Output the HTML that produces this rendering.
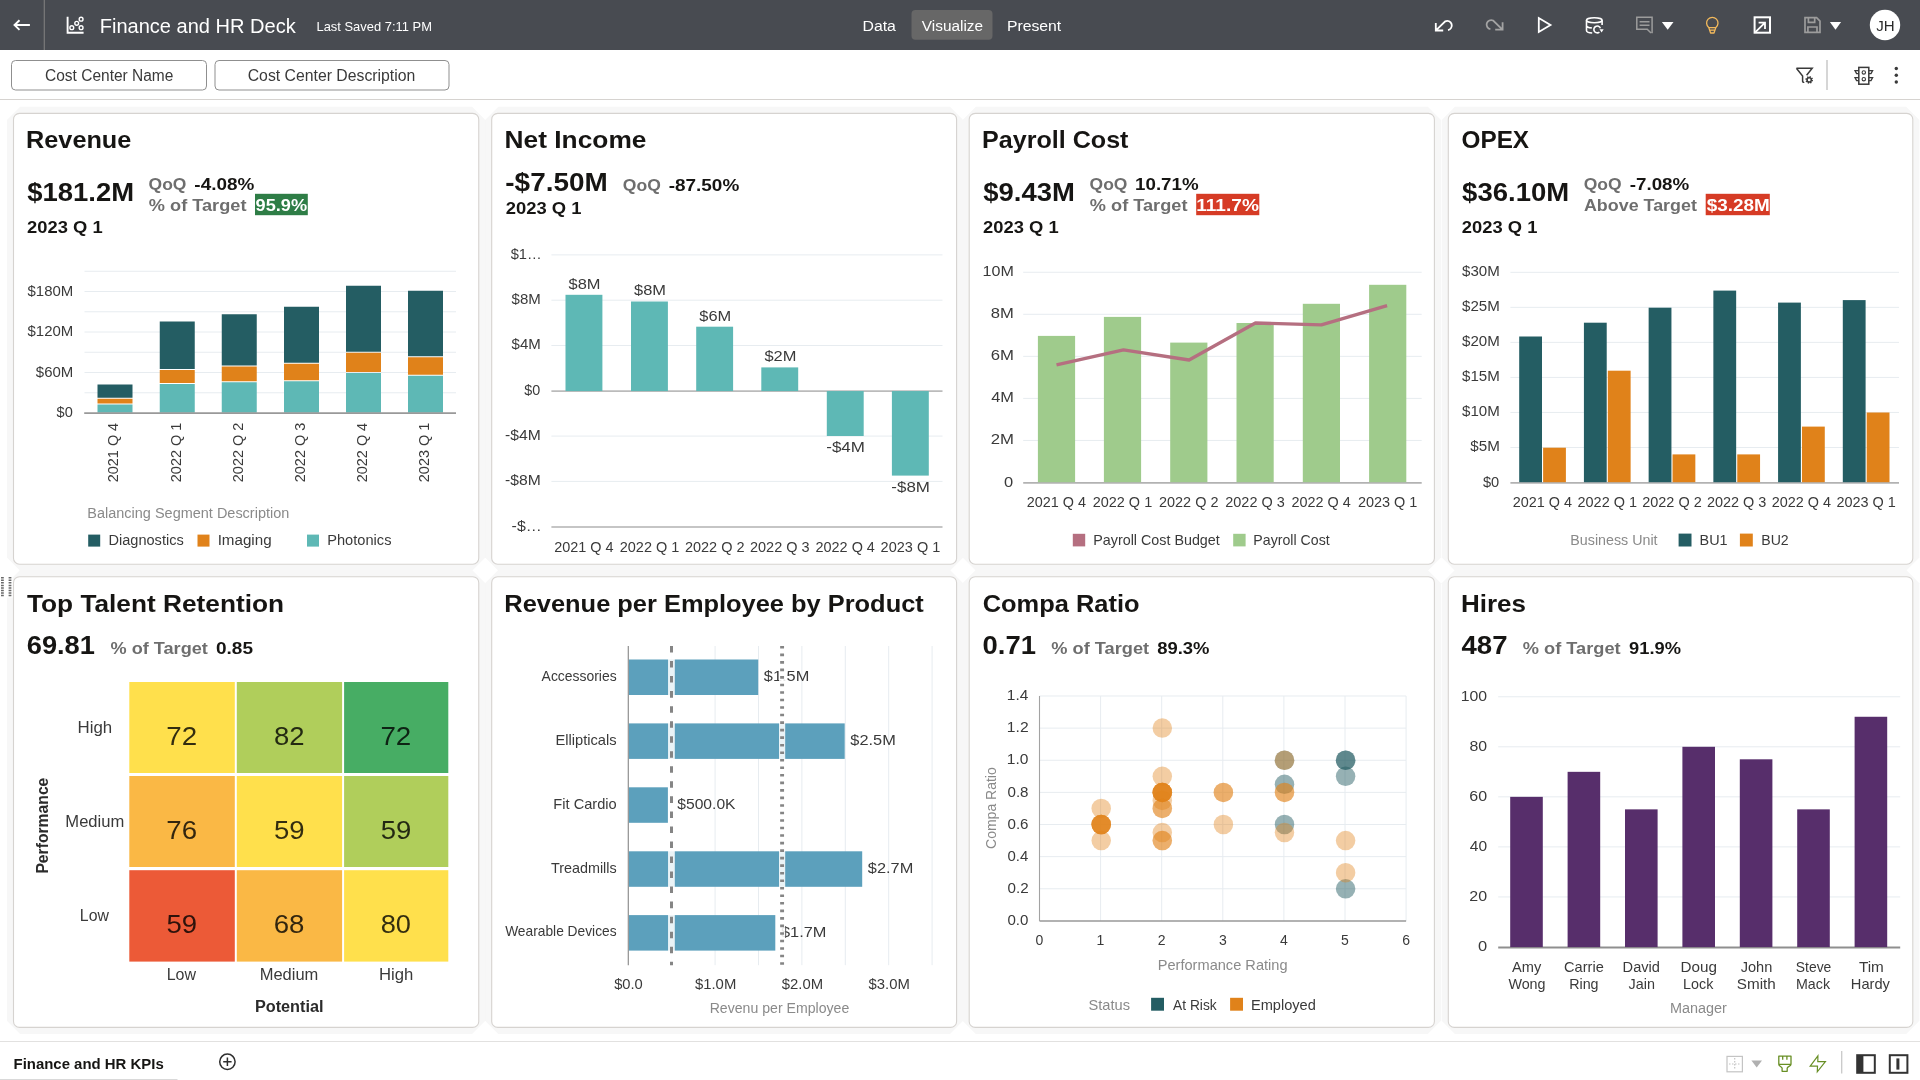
<!DOCTYPE html>
<html><head><meta charset="utf-8"><title>Finance and HR Deck</title>
<style>
html,body{margin:0;padding:0;background:#fff;}
body{width:1920px;height:1080px;overflow:hidden;position:relative;font-family:"Liberation Sans",sans-serif;}
.hdr{position:absolute;left:0;top:0;width:1920px;height:50px;background:#484b51;}
.fbar{position:absolute;left:0;top:50px;width:1920px;height:49px;background:#fff;border-bottom:1px solid #d6d3d0;}
.foot{position:absolute;left:0;top:1041px;width:1920px;height:38px;background:#fff;border-top:1px solid #e2e1e0;}
.card{position:absolute;box-sizing:content-box;background:#fff;border:1px solid #d5d2cf;border-radius:6px;box-shadow:0 0 0 4.5px #f7f7f7,0 0 2px 5px #f7f7f7;}
svg.ov{position:absolute;left:0;top:0;will-change:transform;font-family:"Liberation Sans",sans-serif;}
svg.ov text{white-space:pre;}
</style></head>
<body>
<div class="hdr"></div>
<div class="fbar"></div>
<div class="foot"></div>
<svg class="ov" width="1920" height="1080" viewBox="0 0 1920 1080">
<polygon points="20.1,106.8 472.15,106.8 485.35,120 485.35,557.6 472.15,570.8 20.1,570.8 6.9,557.6 6.9,120" fill="#f7f7f7"/>
<polygon points="498.3,106.8 950,106.8 963.2,120 963.2,557.6 950,570.8 498.3,570.8 485.1,557.6 485.1,120" fill="#f7f7f7"/>
<polygon points="975.8,106.8 1427.8,106.8 1441,120 1441,557.6 1427.8,570.8 975.8,570.8 962.6,557.6 962.6,120" fill="#f7f7f7"/>
<polygon points="1454.9,106.8 1906.2,106.8 1919.4,120 1919.4,557.6 1906.2,570.8 1454.9,570.8 1441.7,557.6 1441.7,120" fill="#f7f7f7"/>
<polygon points="20.1,570.1 472.15,570.1 485.35,583.3 485.35,1020.8 472.15,1034 20.1,1034 6.9,1020.8 6.9,583.3" fill="#f7f7f7"/>
<polygon points="498.3,570.1 950,570.1 963.2,583.3 963.2,1020.8 950,1034 498.3,1034 485.1,1020.8 485.1,583.3" fill="#f7f7f7"/>
<polygon points="975.8,570.1 1427.8,570.1 1441,583.3 1441,1020.8 1427.8,1034 975.8,1034 962.6,1020.8 962.6,583.3" fill="#f7f7f7"/>
<polygon points="1454.9,570.1 1906.2,570.1 1919.4,583.3 1919.4,1020.8 1906.2,1034 1454.9,1034 1441.7,1020.8 1441.7,583.3" fill="#f7f7f7"/>
<rect x="13.5" y="113.4" width="465.25" height="450.8" rx="6" fill="#fff" stroke="#d6d3d0" stroke-width="1.1"/>
<rect x="491.7" y="113.4" width="464.9" height="450.8" rx="6" fill="#fff" stroke="#d6d3d0" stroke-width="1.1"/>
<rect x="969.2" y="113.4" width="465.2" height="450.8" rx="6" fill="#fff" stroke="#d6d3d0" stroke-width="1.1"/>
<rect x="1448.3" y="113.4" width="464.5" height="450.8" rx="6" fill="#fff" stroke="#d6d3d0" stroke-width="1.1"/>
<rect x="13.5" y="576.7" width="465.25" height="450.7" rx="6" fill="#fff" stroke="#d6d3d0" stroke-width="1.1"/>
<rect x="491.7" y="576.7" width="464.9" height="450.7" rx="6" fill="#fff" stroke="#d6d3d0" stroke-width="1.1"/>
<rect x="969.2" y="576.7" width="465.2" height="450.7" rx="6" fill="#fff" stroke="#d6d3d0" stroke-width="1.1"/>
<rect x="1448.3" y="576.7" width="464.5" height="450.7" rx="6" fill="#fff" stroke="#d6d3d0" stroke-width="1.1"/>
<path d="M29.9 25.05H14.6M19.5 20.2L14.5 25.05L19.5 29.9" fill="none" stroke="#fff" stroke-width="1.9" stroke-linecap="butt" stroke-linejoin="miter"/>
<line x1="44.3" y1="0" x2="44.3" y2="50" stroke="#7b7b7b" stroke-width="1.2"/>
<path d="M67.6 16.7V32.7H83.6" fill="none" stroke="#fff" stroke-width="1.9"/>
<circle cx="71.8" cy="27.7" r="1.9" fill="none" stroke="#fff" stroke-width="1.4"/>
<circle cx="76.7" cy="23.3" r="1.9" fill="none" stroke="#fff" stroke-width="1.4"/>
<circle cx="81.1" cy="19.2" r="1.9" fill="none" stroke="#fff" stroke-width="1.4"/>
<circle cx="81.1" cy="27.7" r="1.9" fill="none" stroke="#fff" stroke-width="1.4"/>
<text transform="translate(99.7 32.8) scale(1.0178 1)" font-size="19.7" fill="#ffffff">Finance and HR Deck</text>
<text transform="translate(316.47 30.8) scale(1.0602 1)" font-size="12.2" fill="#ffffff">Last Saved 7:11 PM</text>
<text transform="translate(862.53 30.6) scale(1.0691 1)" font-size="14.8" fill="#ffffff">Data</text>
<rect x="911.5" y="10" width="81" height="29.8" rx="4" fill="#676767"/>
<text transform="translate(921.82 30.6) scale(1.0392 1)" font-size="14.8" fill="#ffffff">Visualize</text>
<text transform="translate(1006.94 30.6) scale(1.0658 1)" font-size="14.8" fill="#ffffff">Present</text>
<g stroke="#fff"><path d="M1435.8 23V30.5H1443.2 M1436.2 30.1L1445.26 21.33A4.6 4.6 0 1 1 1448 30.03" fill="none" stroke-width="1.8"/></g>
<g transform="translate(2938.4 -0.8) scale(-1 1)" stroke="#a3a3a3"><path d="M1435.8 23V30.5H1443.2 M1436.2 30.1L1445.26 21.33A4.6 4.6 0 1 1 1448 30.03" fill="none" stroke-width="1.8"/></g>
<path d="M1538.8 18.1V32L1550.5 25.05Z" fill="none" stroke="#fff" stroke-width="1.8" stroke-linejoin="miter"/>
<ellipse cx="1594.3" cy="20.2" rx="7.8" ry="2.5" fill="none" stroke="#fff" stroke-width="1.6"/>
<path d="M1586.5 20.2V30.4C1586.5 31.8 1589 32.8 1592.2 33 M1586.5 25.4C1586.5 26.8 1589 27.7 1591.8 27.9 M1602.1 20.2V24.9" fill="none" stroke="#fff" stroke-width="1.6"/>
<path d="M1600.4 28.2A3.4 3.4 0 1 0 1599.4 32.1" fill="none" stroke="#fff" stroke-width="1.6"/><path d="M1599.5 29.3H1603.7L1601.6 32.5Z" fill="#fff"/>
<path d="M1652.1 33.2V17.3H1636.8V29.3H1647.2L1651 33" fill="none" stroke="#9c9c9c" stroke-width="1.5" stroke-linejoin="miter"/>
<path d="M1639.6 21.7H1649.5M1639.6 25.3H1649.5" stroke="#9c9c9c" stroke-width="1.4"/>
<path d="M1661.9 22H1673.5L1667.7 29.8Z" fill="#fff"/>
<path d="M1708.7 27.4A5.7 5.7 0 1 1 1715.9 27.4L1714 33H1710.6Z M1708.9 27.7H1715.7 M1709.7 30.2H1714.9" fill="none" stroke="#f2b95c" stroke-width="1.3" stroke-linejoin="round"/>
<rect x="1754.6" y="17.3" width="15.4" height="15.4" fill="none" stroke="#fff" stroke-width="2"/>
<path d="M1755.4 32.2L1765 22.6 M1758.6 22.6H1765V29" fill="none" stroke="#fff" stroke-width="1.8"/>
<path d="M1805 17.7H1816.6L1820 21.2V32.3H1805Z M1808.4 17.7V22.4H1814.7V17.7 M1807.9 32.3V27H1817V32.3" fill="none" stroke="#9c9c9c" stroke-width="1.7" stroke-linejoin="miter"/>
<path d="M1829.9 22.1H1841.1L1835.5 29.7Z" fill="#fff"/>
<circle cx="1885" cy="25" r="15.2" fill="#fff"/>
<text transform="translate(1876.17 31) scale(1.0421 1)" font-size="14.5" fill="#2b2b2b">JH</text>
<rect x="11.5" y="60.5" width="195.0" height="29.5" rx="4" fill="#fff" stroke="#8f8f8f" stroke-width="1"/>
<text transform="translate(45.02 81.2) scale(0.994 1)" font-size="15.6" fill="#3a3a3a">Cost Center Name</text>
<rect x="215" y="60.5" width="234" height="29.5" rx="4" fill="#fff" stroke="#8f8f8f" stroke-width="1"/>
<text transform="translate(247.71 81.2) scale(1.0129 1)" font-size="15.6" fill="#3a3a3a">Cost Center Description</text>
<path d="M1796.4 68.2H1812.2L1806.6 75.2 M1796.4 68.2L1802.6 76V81.2C1802.6 82.2 1803.4 82.6 1804.2 82.2" fill="none" stroke="#3a3a3a" stroke-width="1.5"/>
<circle cx="1809.2" cy="79.9" r="3" fill="none" stroke="#3a3a3a" stroke-width="1.6" stroke-dasharray="1.25 1.1"/><circle cx="1809.2" cy="79.9" r="2.1" fill="none" stroke="#3a3a3a" stroke-width="1.5"/>
<line x1="1827" y1="60" x2="1827" y2="90" stroke="#c9c9c9" stroke-width="1.5"/>
<rect x="1858.8" y="67.4" width="10" height="16.8" fill="none" stroke="#3a3a3a" stroke-width="1.5"/>
<circle cx="1863.8" cy="72.4" r="1.7" fill="none" stroke="#3a3a3a" stroke-width="1.1"/><circle cx="1863.8" cy="79.2" r="1.7" fill="none" stroke="#3a3a3a" stroke-width="1.1"/>
<path d="M1858.8 70.6H1855L1856.6 73.6H1858.8 M1858.8 77.6H1855L1856.6 80.6H1858.8 M1868.8 70.6H1872.6L1871 73.6H1868.8 M1868.8 77.6H1872.6L1871 80.6H1868.8" fill="none" stroke="#3a3a3a" stroke-width="1.3"/>
<circle cx="1896.3" cy="68.5" r="1.7" fill="#3a3a3a"/>
<circle cx="1896.3" cy="75.3" r="1.7" fill="#3a3a3a"/>
<circle cx="1896.3" cy="82" r="1.7" fill="#3a3a3a"/>
<text transform="translate(13.53 1068.7) scale(1.0166 1)" font-size="14.7" fill="#161513" font-weight="700">Finance and HR KPIs</text>
<line x1="0" y1="1079.5" x2="177.5" y2="1079.5" stroke="#d9d9d9" stroke-width="1"/>
<circle cx="227.4" cy="1061.8" r="7.7" fill="none" stroke="#2f2f2f" stroke-width="1.5"/><path d="M223.2 1061.8H231.6M227.4 1057.6V1066" stroke="#2f2f2f" stroke-width="1.5"/>
<rect x="1727" y="1056.4" width="15.4" height="15.4" fill="none" stroke="#c4c4c4" stroke-width="1.2"/>
<path d="M1734.7 1058V1070M1729 1064H1740.6" stroke="#c4c4c4" stroke-width="1.2" stroke-dasharray="1.5 1.5"/>
<path d="M1751.4 1060.6H1762L1756.7 1067.4Z" fill="#b0b0b0"/>
<path d="M1778.8 1056.1H1791V1064.3C1791 1066.6 1787.7 1066.2 1787.2 1068.1V1071.3H1782.1V1068.1C1781.6 1066.2 1778.8 1066.6 1778.8 1064.3Z M1778.8 1064.3H1791 M1782.7 1056.1V1059.8 M1786.9 1056.1V1059.8" fill="none" stroke="#688f25" stroke-width="1.3" stroke-linejoin="round"/>
<path d="M1817.9 1055.9L1810.2 1066.2H1817.5L1817.3 1071.8L1825.4 1061.6H1817.8Z" fill="none" stroke="#688f25" stroke-width="1.2" stroke-linejoin="miter"/>
<line x1="1841.7" y1="1051" x2="1841.7" y2="1073.6" stroke="#c9c9c9" stroke-width="1.3"/>
<rect x="1857.2" y="1055.2" width="17.6" height="17.6" fill="none" stroke="#333" stroke-width="2"/><rect x="1857" y="1055" width="6.4" height="18" fill="#333"/>
<rect x="1889.8" y="1055.2" width="17.6" height="17.6" fill="none" stroke="#333" stroke-width="2"/><rect x="1896.4" y="1058.4" width="3" height="11.2" fill="#333"/>
<rect x="0" y="572" width="12.6" height="25.5" fill="#fff"/>
<path d="M2.4 577.05V597M10 577.05V597" stroke="#6a6a6a" stroke-width="2.8" stroke-dasharray="1.5 1.03"/>
<text transform="translate(26.06 148.3) scale(1.0887 1)" font-size="23.2" fill="#161513" font-weight="700">Revenue</text>
<text transform="translate(27.29 200.5) scale(1.0485 1)" font-size="26.2" fill="#161513" font-weight="700">$181.2M</text>
<text transform="translate(27.06 233.3) scale(1.0807 1)" font-size="17" fill="#161513" font-weight="700">2023 Q 1</text>
<text transform="translate(148.6 190) scale(1.0273 1)" font-size="17" fill="#6e6e6e" font-weight="700">QoQ</text>
<text transform="translate(194.34 190) scale(1.1122 1)" font-size="17" fill="#161513" font-weight="700">-4.08%</text>
<text transform="translate(148.85 211.3) scale(1.0695 1)" font-size="17" fill="#6e6e6e" font-weight="700">% of Target</text>
<rect x="255" y="193.8" width="52.8" height="21.4" fill="#2e7d46"/>
<text transform="translate(255.56 211.3) scale(1.0705 1)" font-size="17" fill="#fff" font-weight="700">95.9%</text>
<line x1="84.5" y1="392.75" x2="456" y2="392.75" stroke="#e7ecf0" stroke-width="1"/>
<line x1="84.5" y1="372.5" x2="456" y2="372.5" stroke="#e7ecf0" stroke-width="1"/>
<line x1="84.5" y1="352.25" x2="456" y2="352.25" stroke="#e7ecf0" stroke-width="1"/>
<line x1="84.5" y1="332" x2="456" y2="332" stroke="#e7ecf0" stroke-width="1"/>
<line x1="84.5" y1="311.75" x2="456" y2="311.75" stroke="#e7ecf0" stroke-width="1"/>
<line x1="84.5" y1="291.5" x2="456" y2="291.5" stroke="#e7ecf0" stroke-width="1"/>
<line x1="84.5" y1="271.25" x2="456" y2="271.25" stroke="#e7ecf0" stroke-width="1"/>
<text transform="translate(27.55 295.55) scale(1.0702 1)" font-size="14" fill="#3a3a3a">$180M</text>
<text transform="translate(27.55 336.05) scale(1.0702 1)" font-size="14" fill="#3a3a3a">$120M</text>
<text transform="translate(35.85 376.55) scale(1.0707 1)" font-size="14" fill="#3a3a3a">$60M</text>
<text transform="translate(56.55 416.8) scale(1.0396 1)" font-size="14" fill="#3a3a3a">$0</text>
<rect x="97.5" y="384.5" width="35" height="13.25" fill="#245d63"/>
<rect x="97.5" y="398.75" width="35" height="4.75" fill="#e0821a"/>
<rect x="97.5" y="404.5" width="35" height="8.2" fill="#5eb8b5"/>
<text transform="translate(118.4 423.2) rotate(-90) translate(-59.02 0) scale(1.0091 1)" font-size="14.3" fill="#3a3a3a">2021 Q 4</text>
<rect x="159.75" y="321.5" width="35" height="47.5" fill="#245d63"/>
<rect x="159.75" y="370" width="35" height="13" fill="#e0821a"/>
<rect x="159.75" y="384" width="35" height="28.7" fill="#5eb8b5"/>
<text transform="translate(180.65 423.2) rotate(-90) translate(-59.03 0) scale(1.0142 1)" font-size="14.3" fill="#3a3a3a">2022 Q 1</text>
<rect x="221.75" y="314.25" width="35" height="51.25" fill="#245d63"/>
<rect x="221.75" y="366.5" width="35" height="14.75" fill="#e0821a"/>
<rect x="221.75" y="382.25" width="35" height="30.45" fill="#5eb8b5"/>
<text transform="translate(242.65 423.2) rotate(-90) translate(-59.03 0) scale(1.0142 1)" font-size="14.3" fill="#3a3a3a">2022 Q 2</text>
<rect x="284" y="306.75" width="35" height="56" fill="#245d63"/>
<rect x="284" y="363.75" width="35" height="16.5" fill="#e0821a"/>
<rect x="284" y="381.25" width="35" height="31.45" fill="#5eb8b5"/>
<text transform="translate(304.9 423.2) rotate(-90) translate(-59.02 0) scale(1.0129 1)" font-size="14.3" fill="#3a3a3a">2022 Q 3</text>
<rect x="346" y="285.75" width="35" height="66" fill="#245d63"/>
<rect x="346" y="352.75" width="35" height="19.25" fill="#e0821a"/>
<rect x="346" y="373" width="35" height="39.7" fill="#5eb8b5"/>
<text transform="translate(366.9 423.2) rotate(-90) translate(-59.02 0) scale(1.0091 1)" font-size="14.3" fill="#3a3a3a">2022 Q 4</text>
<rect x="408" y="290.75" width="35" height="65.5" fill="#245d63"/>
<rect x="408" y="357.25" width="35" height="17.5" fill="#e0821a"/>
<rect x="408" y="375.75" width="35" height="36.95" fill="#5eb8b5"/>
<text transform="translate(428.9 423.2) rotate(-90) translate(-59.03 0) scale(1.0142 1)" font-size="14.3" fill="#3a3a3a">2023 Q 1</text>
<line x1="84.2" y1="413.1" x2="456" y2="413.1" stroke="#999999" stroke-width="1.8"/>
<text transform="translate(87.34 517.6) scale(1.0344 1)" font-size="14" fill="#8a8a8a">Balancing Segment Description</text>
<rect x="88.2" y="534.6" width="12" height="12" fill="#245d63"/>
<text transform="translate(108.54 545.4) scale(1.04 1)" font-size="14" fill="#3a3a3a">Diagnostics</text>
<rect x="197.5" y="534.6" width="12" height="12" fill="#e0821a"/>
<text transform="translate(217.63 545.4) scale(1.0845 1)" font-size="14" fill="#3a3a3a">Imaging</text>
<rect x="307" y="534.6" width="12" height="12" fill="#5eb8b5"/>
<text transform="translate(327.23 545.4) scale(1.0459 1)" font-size="14" fill="#3a3a3a">Photonics</text>
<text transform="translate(504.59 148.3) scale(1.1348 1)" font-size="23.2" fill="#161513" font-weight="700">Net Income</text>
<text transform="translate(505.32 191) scale(1.0659 1)" font-size="26.2" fill="#161513" font-weight="700">-$7.50M</text>
<text transform="translate(622.8 191) scale(1.0329 1)" font-size="17" fill="#6e6e6e" font-weight="700">QoQ</text>
<text transform="translate(668.64 191) scale(1.1155 1)" font-size="17" fill="#161513" font-weight="700">-87.50%</text>
<text transform="translate(505.66 214.3) scale(1.0836 1)" font-size="17" fill="#161513" font-weight="700">2023 Q 1</text>
<line x1="551.4" y1="481.4" x2="942.5" y2="481.4" stroke="#e7ecf0" stroke-width="1"/>
<line x1="551.4" y1="436.1" x2="942.5" y2="436.1" stroke="#e7ecf0" stroke-width="1"/>
<line x1="551.4" y1="345.5" x2="942.5" y2="345.5" stroke="#e7ecf0" stroke-width="1"/>
<line x1="551.4" y1="300.2" x2="942.5" y2="300.2" stroke="#e7ecf0" stroke-width="1"/>
<line x1="551.4" y1="254.9" x2="942.5" y2="254.9" stroke="#e7ecf0" stroke-width="1"/>
<line x1="551.4" y1="527" x2="942.5" y2="527" stroke="#b2b2b2" stroke-width="1.6"/>
<text transform="translate(510.65 258.7) scale(1.0469 1)" font-size="14" fill="#3a3a3a">$1…</text>
<text transform="translate(511.55 304) scale(1.0743 1)" font-size="14" fill="#3a3a3a">$8M</text>
<text transform="translate(511.55 349.3) scale(1.0743 1)" font-size="14" fill="#3a3a3a">$4M</text>
<text transform="translate(524.16 394.6) scale(1.0262 1)" font-size="14" fill="#3a3a3a">$0</text>
<text transform="translate(505.09 439.9) scale(1.1203 1)" font-size="14" fill="#3a3a3a">-$4M</text>
<text transform="translate(505.09 485.2) scale(1.1203 1)" font-size="14" fill="#3a3a3a">-$8M</text>
<text transform="translate(511.58 530.5) scale(1.1404 1)" font-size="14" fill="#3a3a3a">-$…</text>
<line x1="551.4" y1="391.05" x2="942.5" y2="391.05" stroke="#bbbbbb" stroke-width="1.7"/>
<rect x="565.5" y="294.8" width="36.9" height="96.25" fill="#5eb8b5"/>
<text transform="translate(568.59 288.6) scale(1.0961 1)" font-size="15" fill="#3a3a3a">$8M</text>
<text transform="translate(554.23 551.5) scale(1.0091 1)" font-size="14.3" fill="#3a3a3a">2021 Q 4</text>
<rect x="631" y="301.5" width="36.9" height="89.55" fill="#5eb8b5"/>
<text transform="translate(634.09 295.3) scale(1.0961 1)" font-size="15" fill="#3a3a3a">$8M</text>
<text transform="translate(619.72 551.5) scale(1.0142 1)" font-size="14.3" fill="#3a3a3a">2022 Q 1</text>
<rect x="696.2" y="326.7" width="36.9" height="64.35" fill="#5eb8b5"/>
<text transform="translate(699.29 320.5) scale(1.0961 1)" font-size="15" fill="#3a3a3a">$6M</text>
<text transform="translate(684.92 551.5) scale(1.0142 1)" font-size="14.3" fill="#3a3a3a">2022 Q 2</text>
<rect x="761.3" y="367.4" width="36.9" height="23.65" fill="#5eb8b5"/>
<text transform="translate(764.39 361.2) scale(1.0961 1)" font-size="15" fill="#3a3a3a">$2M</text>
<text transform="translate(750.03 551.5) scale(1.0129 1)" font-size="14.3" fill="#3a3a3a">2022 Q 3</text>
<rect x="826.8" y="391.05" width="36.9" height="44.95" fill="#5eb8b5"/>
<text transform="translate(826.24 452.1) scale(1.1554 1)" font-size="14.7" fill="#3a3a3a">-$4M</text>
<text transform="translate(815.53 551.5) scale(1.0091 1)" font-size="14.3" fill="#3a3a3a">2022 Q 4</text>
<rect x="891.9" y="391.05" width="36.9" height="84.55" fill="#5eb8b5"/>
<text transform="translate(891.34 491.7) scale(1.1554 1)" font-size="14.7" fill="#3a3a3a">-$8M</text>
<text transform="translate(880.62 551.5) scale(1.0142 1)" font-size="14.3" fill="#3a3a3a">2023 Q 1</text>
<text transform="translate(982.07 148.3) scale(1.0823 1)" font-size="23.2" fill="#161513" font-weight="700">Payroll Cost</text>
<text transform="translate(983.29 200.5) scale(1.0479 1)" font-size="26.2" fill="#161513" font-weight="700">$9.43M</text>
<text transform="translate(983.06 233.3) scale(1.0807 1)" font-size="17" fill="#161513" font-weight="700">2023 Q 1</text>
<text transform="translate(1089.6 190) scale(1.0273 1)" font-size="17" fill="#6e6e6e" font-weight="700">QoQ</text>
<text transform="translate(1135.08 190) scale(1.1018 1)" font-size="17" fill="#161513" font-weight="700">10.71%</text>
<text transform="translate(1089.85 211.3) scale(1.0695 1)" font-size="17" fill="#6e6e6e" font-weight="700">% of Target</text>
<rect x="1196.2" y="193.8" width="63.1" height="21.4" fill="#d63b25"/>
<text transform="translate(1196.25 211.3) scale(1.1231 1)" font-size="17" fill="#fff" font-weight="700">111.7%</text>
<line x1="1023.2" y1="440.45" x2="1421.7" y2="440.45" stroke="#e7ecf0" stroke-width="1"/>
<line x1="1023.2" y1="398.4" x2="1421.7" y2="398.4" stroke="#e7ecf0" stroke-width="1"/>
<line x1="1023.2" y1="356.35" x2="1421.7" y2="356.35" stroke="#e7ecf0" stroke-width="1"/>
<line x1="1023.2" y1="314.3" x2="1421.7" y2="314.3" stroke="#e7ecf0" stroke-width="1"/>
<line x1="1023.2" y1="272.25" x2="1421.7" y2="272.25" stroke="#e7ecf0" stroke-width="1"/>
<text transform="translate(982.59 276.25) scale(1.1492 1)" font-size="14" fill="#3a3a3a">10M</text>
<text transform="translate(990.84 318.3) scale(1.1867 1)" font-size="14" fill="#3a3a3a">8M</text>
<text transform="translate(990.66 360.35) scale(1.1961 1)" font-size="14" fill="#3a3a3a">6M</text>
<text transform="translate(991.17 402.4) scale(1.1683 1)" font-size="14" fill="#3a3a3a">4M</text>
<text transform="translate(990.66 444.45) scale(1.1961 1)" font-size="14" fill="#3a3a3a">2M</text>
<text transform="translate(1004.02 486.5) scale(1.1782 1)" font-size="14" fill="#3a3a3a">0</text>
<line x1="1023.2" y1="482.9" x2="1421.7" y2="482.9" stroke="#b2b2b2" stroke-width="1.6"/>
<rect x="1037.9" y="335.9" width="37.2" height="146.3" fill="#9fcb8c"/>
<text transform="translate(1026.68 506.6) scale(1.0074 1)" font-size="14.3" fill="#3a3a3a">2021 Q 4</text>
<rect x="1103.9" y="316.9" width="37.2" height="165.3" fill="#9fcb8c"/>
<text transform="translate(1092.68 506.6) scale(1.0124 1)" font-size="14.3" fill="#3a3a3a">2022 Q 1</text>
<rect x="1170.2" y="342.6" width="37.2" height="139.6" fill="#9fcb8c"/>
<text transform="translate(1158.98 506.6) scale(1.0124 1)" font-size="14.3" fill="#3a3a3a">2022 Q 2</text>
<rect x="1236.5" y="323" width="37.2" height="159.2" fill="#9fcb8c"/>
<text transform="translate(1225.28 506.6) scale(1.0112 1)" font-size="14.3" fill="#3a3a3a">2022 Q 3</text>
<rect x="1302.8" y="303.8" width="37.2" height="178.4" fill="#9fcb8c"/>
<text transform="translate(1291.58 506.6) scale(1.0074 1)" font-size="14.3" fill="#3a3a3a">2022 Q 4</text>
<rect x="1369.1" y="284.8" width="37.2" height="197.4" fill="#9fcb8c"/>
<text transform="translate(1357.88 506.6) scale(1.0124 1)" font-size="14.3" fill="#3a3a3a">2023 Q 1</text>
<polyline points="1056.5,364.9 1123.5,349.9 1189.1,360 1255.4,323 1321.4,324.9 1387.1,305.6" fill="none" stroke="#b56f80" stroke-width="3.4" stroke-linejoin="round" stroke-linecap="butt"/>
<rect x="1072.8" y="533.8" width="12.4" height="12.6" fill="#b56f80"/>
<text transform="translate(1093.25 545.4) scale(1.0229 1)" font-size="14" fill="#3a3a3a">Payroll Cost Budget</text>
<rect x="1233.2" y="533.8" width="12.4" height="12.6" fill="#9fcb8c"/>
<text transform="translate(1253.37 545.4) scale(1.0125 1)" font-size="14" fill="#3a3a3a">Payroll Cost</text>
<text transform="translate(1461.53 148.3) scale(1.0484 1)" font-size="23.2" fill="#161513" font-weight="700">OPEX</text>
<text transform="translate(1462.09 200.5) scale(1.0505 1)" font-size="26.2" fill="#161513" font-weight="700">$36.10M</text>
<text transform="translate(1461.86 233.3) scale(1.0807 1)" font-size="17" fill="#161513" font-weight="700">2023 Q 1</text>
<text transform="translate(1583.7 190) scale(1.0301 1)" font-size="17" fill="#6e6e6e" font-weight="700">QoQ</text>
<text transform="translate(1629.74 190) scale(1.1046 1)" font-size="17" fill="#161513" font-weight="700">-7.08%</text>
<text transform="translate(1583.95 211.3) scale(1.0528 1)" font-size="17" fill="#6e6e6e" font-weight="700">Above Target</text>
<rect x="1705.7" y="193.8" width="64.1" height="21.4" fill="#d63b25"/>
<text transform="translate(1706.72 211.3) scale(1.1115 1)" font-size="17" fill="#fff" font-weight="700">$3.28M</text>
<line x1="1510.4" y1="447.47" x2="1899" y2="447.47" stroke="#e7ecf0" stroke-width="1"/>
<line x1="1510.4" y1="412.44" x2="1899" y2="412.44" stroke="#e7ecf0" stroke-width="1"/>
<line x1="1510.4" y1="377.41" x2="1899" y2="377.41" stroke="#e7ecf0" stroke-width="1"/>
<line x1="1510.4" y1="342.38" x2="1899" y2="342.38" stroke="#e7ecf0" stroke-width="1"/>
<line x1="1510.4" y1="307.35" x2="1899" y2="307.35" stroke="#e7ecf0" stroke-width="1"/>
<line x1="1510.4" y1="272.32" x2="1899" y2="272.32" stroke="#e7ecf0" stroke-width="1"/>
<text transform="translate(1482.95 486.5) scale(1.0463 1)" font-size="14" fill="#3a3a3a">$0</text>
<text transform="translate(1470.35 451.47) scale(1.0859 1)" font-size="14" fill="#3a3a3a">$5M</text>
<text transform="translate(1462.05 416.44) scale(1.0796 1)" font-size="14" fill="#3a3a3a">$10M</text>
<text transform="translate(1462.05 381.41) scale(1.0796 1)" font-size="14" fill="#3a3a3a">$15M</text>
<text transform="translate(1462.05 346.38) scale(1.0796 1)" font-size="14" fill="#3a3a3a">$20M</text>
<text transform="translate(1462.05 311.35) scale(1.0796 1)" font-size="14" fill="#3a3a3a">$25M</text>
<text transform="translate(1462.05 276.32) scale(1.0796 1)" font-size="14" fill="#3a3a3a">$30M</text>
<line x1="1510.4" y1="482.9" x2="1899" y2="482.9" stroke="#b2b2b2" stroke-width="1.6"/>
<rect x="1519.2" y="336.5" width="22.8" height="145.7" fill="#245d63"/>
<rect x="1543.1" y="447.7" width="22.8" height="34.5" fill="#e0821a"/>
<text transform="translate(1512.78 506.6) scale(1.0074 1)" font-size="14.3" fill="#3a3a3a">2021 Q 4</text>
<rect x="1583.92" y="322.7" width="22.8" height="159.5" fill="#245d63"/>
<rect x="1607.82" y="370.7" width="22.8" height="111.5" fill="#e0821a"/>
<text transform="translate(1577.5 506.6) scale(1.0124 1)" font-size="14.3" fill="#3a3a3a">2022 Q 1</text>
<rect x="1648.64" y="307.7" width="22.8" height="174.5" fill="#245d63"/>
<rect x="1672.54" y="454.4" width="22.8" height="27.8" fill="#e0821a"/>
<text transform="translate(1642.22 506.6) scale(1.0124 1)" font-size="14.3" fill="#3a3a3a">2022 Q 2</text>
<rect x="1713.36" y="290.6" width="22.8" height="191.6" fill="#245d63"/>
<rect x="1737.26" y="454.4" width="22.8" height="27.8" fill="#e0821a"/>
<text transform="translate(1706.94 506.6) scale(1.0112 1)" font-size="14.3" fill="#3a3a3a">2022 Q 3</text>
<rect x="1778.08" y="302.6" width="22.8" height="179.6" fill="#245d63"/>
<rect x="1801.98" y="426.6" width="22.8" height="55.6" fill="#e0821a"/>
<text transform="translate(1771.66 506.6) scale(1.0074 1)" font-size="14.3" fill="#3a3a3a">2022 Q 4</text>
<rect x="1842.8" y="300.1" width="22.8" height="182.1" fill="#245d63"/>
<rect x="1866.7" y="412.5" width="22.8" height="69.7" fill="#e0821a"/>
<text transform="translate(1836.38 506.6) scale(1.0124 1)" font-size="14.3" fill="#3a3a3a">2023 Q 1</text>
<text transform="translate(1570.36 545.4) scale(1.0196 1)" font-size="14" fill="#8a8a8a">Business Unit</text>
<rect x="1678.6" y="533.6" width="12.9" height="12.9" fill="#245d63"/>
<text transform="translate(1699.54 545.4) scale(1.0322 1)" font-size="14" fill="#3a3a3a">BU1</text>
<rect x="1739.9" y="533.6" width="12.9" height="12.9" fill="#e0821a"/>
<text transform="translate(1761.27 545.4) scale(1.0086 1)" font-size="14" fill="#3a3a3a">BU2</text>
<text transform="translate(26.94 612.3) scale(1.1315 1)" font-size="23.2" fill="#161513" font-weight="700">Top Talent Retention</text>
<text transform="translate(26.75 654.2) scale(1.0402 1)" font-size="26.2" fill="#161513" font-weight="700">69.81</text>
<text transform="translate(110.55 654.4) scale(1.0662 1)" font-size="17" fill="#6e6e6e" font-weight="700">% of Target</text>
<text transform="translate(215.94 654.4) scale(1.1202 1)" font-size="17" fill="#161513" font-weight="700">0.85</text>
<rect x="129.3" y="682" width="105.5" height="91" fill="#ffe04c"/>
<text transform="translate(166.26 744.8) scale(1.0686 1)" font-size="26" fill="#000" fill-opacity="0.8">72</text>
<rect x="236.8" y="682" width="105.3" height="91" fill="#b0ce5b"/>
<text transform="translate(273.95 744.8) scale(1.0582 1)" font-size="26" fill="#000" fill-opacity="0.8">82</text>
<rect x="344.1" y="682" width="104.2" height="91" fill="#47ad64"/>
<text transform="translate(380.41 744.8) scale(1.0686 1)" font-size="26" fill="#000" fill-opacity="0.8">72</text>
<rect x="129.3" y="776" width="105.5" height="91" fill="#fab845"/>
<text transform="translate(166.27 838.9) scale(1.0633 1)" font-size="26" fill="#000" fill-opacity="0.8">76</text>
<rect x="236.8" y="776" width="105.3" height="91" fill="#ffe04c"/>
<text transform="translate(273.95 838.9) scale(1.0582 1)" font-size="26" fill="#000" fill-opacity="0.8">59</text>
<rect x="344.1" y="776" width="104.2" height="91" fill="#b0ce5b"/>
<text transform="translate(380.7 838.9) scale(1.0582 1)" font-size="26" fill="#000" fill-opacity="0.8">59</text>
<rect x="129.3" y="870.2" width="105.5" height="91.4" fill="#ec5a37"/>
<text transform="translate(166.55 933.2) scale(1.0582 1)" font-size="26" fill="#000" fill-opacity="0.8">59</text>
<rect x="236.8" y="870.2" width="105.3" height="91.4" fill="#fab845"/>
<text transform="translate(273.67 933.2) scale(1.0633 1)" font-size="26" fill="#000" fill-opacity="0.8">68</text>
<rect x="344.1" y="870.2" width="104.2" height="91.4" fill="#ffe04c"/>
<text transform="translate(380.71 933.2) scale(1.0479 1)" font-size="26" fill="#000" fill-opacity="0.8">80</text>
<text transform="translate(77.5 732.9) scale(1.0812 1)" font-size="15.6" fill="#3a3a3a">High</text>
<text transform="translate(65.32 826.8) scale(1.0643 1)" font-size="15.6" fill="#3a3a3a">Medium</text>
<text transform="translate(79.83 920.9) scale(1.0154 1)" font-size="15.6" fill="#3a3a3a">Low</text>
<text transform="translate(166.67 980.2) scale(1.0264 1)" font-size="15.6" fill="#3a3a3a">Low</text>
<text transform="translate(259.68 980.2) scale(1.0587 1)" font-size="15.6" fill="#3a3a3a">Medium</text>
<text transform="translate(378.96 980.2) scale(1.0712 1)" font-size="15.6" fill="#3a3a3a">High</text>
<text transform="translate(254.89 1011.7) scale(1.0423 1)" font-size="15.6" fill="#2b2b2b" font-weight="700">Potential</text>
<text transform="translate(47.7 825.3) rotate(-90) translate(-48.32 0) scale(1.0073 1)" font-size="15.6" fill="#2b2b2b" font-weight="700">Performance</text>
<text transform="translate(504.35 612.3) scale(1.0956 1)" font-size="23.2" fill="#161513" font-weight="700">Revenue per Employee by Product</text>
<line x1="671.7" y1="646" x2="671.7" y2="965.2" stroke="#e7ecf0" stroke-width="1"/>
<line x1="715.1" y1="646" x2="715.1" y2="965.2" stroke="#e7ecf0" stroke-width="1"/>
<line x1="758.5" y1="646" x2="758.5" y2="965.2" stroke="#e7ecf0" stroke-width="1"/>
<line x1="801.9" y1="646" x2="801.9" y2="965.2" stroke="#e7ecf0" stroke-width="1"/>
<line x1="845.3" y1="646" x2="845.3" y2="965.2" stroke="#e7ecf0" stroke-width="1"/>
<line x1="888.7" y1="646" x2="888.7" y2="965.2" stroke="#e7ecf0" stroke-width="1"/>
<line x1="932.1" y1="646" x2="932.1" y2="965.2" stroke="#e7ecf0" stroke-width="1"/>
<rect x="628.8" y="659.5" width="129.4" height="35.5" fill="#5ca0bc"/>
<text transform="translate(541.6 680.75) scale(0.9951 1)" font-size="14" fill="#3a3a3a">Accessories</text>
<text transform="translate(763.84 681.15) scale(1.0905 1)" font-size="15" fill="#3a3a3a">$1.5M</text>
<rect x="628.8" y="723.4" width="215.9" height="35.5" fill="#5ca0bc"/>
<text transform="translate(555.42 744.65) scale(1.0499 1)" font-size="14" fill="#3a3a3a">Ellipticals</text>
<text transform="translate(850.34 745.05) scale(1.0905 1)" font-size="15" fill="#3a3a3a">$2.5M</text>
<rect x="628.8" y="787.3" width="39.1" height="35.5" fill="#5ca0bc"/>
<text transform="translate(553.33 808.55) scale(1.0456 1)" font-size="14" fill="#3a3a3a">Fit Cardio</text>
<text transform="translate(677.24 808.95) scale(1.0436 1)" font-size="15" fill="#3a3a3a">$500.0K</text>
<rect x="628.8" y="851.3" width="233.4" height="35.5" fill="#5ca0bc"/>
<text transform="translate(550.91 872.55) scale(1.0272 1)" font-size="14" fill="#3a3a3a">Treadmills</text>
<text transform="translate(867.84 872.95) scale(1.0905 1)" font-size="15" fill="#3a3a3a">$2.7M</text>
<rect x="628.8" y="915.1" width="146.5" height="35.5" fill="#5ca0bc"/>
<text transform="translate(505.13 936.35) scale(0.9843 1)" font-size="14" fill="#3a3a3a">Wearable Devices</text>
<text transform="translate(780.94 936.75) scale(1.0905 1)" font-size="15" fill="#3a3a3a">$1.7M</text>
<rect x="668.05" y="646" width="6.75" height="319.2" fill="#fff" fill-opacity="0.87"/>
<rect x="779" y="646" width="6.2" height="319.2" fill="#fff" fill-opacity="0.87"/>
<line x1="628.3" y1="646" x2="628.3" y2="965.2" stroke="#8f8f8f" stroke-width="1.2"/>
<line x1="671.5" y1="646" x2="671.5" y2="965.2" stroke="#858585" stroke-width="3" stroke-dasharray="6.55 8.485"/>
<line x1="782.1" y1="646" x2="782.1" y2="965.2" stroke="#858585" stroke-width="3.9" stroke-dasharray="2.6 4.93"/>
<text transform="translate(614.15 988.7) scale(1.0526 1)" font-size="14" fill="#3a3a3a">$0.0</text>
<text transform="translate(694.95 988.7) scale(1.0621 1)" font-size="14" fill="#3a3a3a">$1.0M</text>
<text transform="translate(781.75 988.7) scale(1.0621 1)" font-size="14" fill="#3a3a3a">$2.0M</text>
<text transform="translate(868.55 988.7) scale(1.0621 1)" font-size="14" fill="#3a3a3a">$3.0M</text>
<text transform="translate(709.67 1013.3) scale(1.0084 1)" font-size="14" fill="#8a8a8a">Revenu per Employee</text>
<text transform="translate(982.68 612.3) scale(1.097 1)" font-size="23.2" fill="#161513" font-weight="700">Compa Ratio</text>
<text transform="translate(982.6 654.2) scale(1.0476 1)" font-size="26.2" fill="#161513" font-weight="700">0.71</text>
<text transform="translate(1051.34 654.4) scale(1.0717 1)" font-size="17" fill="#6e6e6e" font-weight="700">% of Target</text>
<text transform="translate(1157.15 654.4) scale(1.0855 1)" font-size="17" fill="#161513" font-weight="700">89.3%</text>
<line x1="1039.5" y1="888.77" x2="1406.1" y2="888.77" stroke="#e7ecf0" stroke-width="1"/>
<line x1="1039.5" y1="856.64" x2="1406.1" y2="856.64" stroke="#e7ecf0" stroke-width="1"/>
<line x1="1039.5" y1="824.51" x2="1406.1" y2="824.51" stroke="#e7ecf0" stroke-width="1"/>
<line x1="1039.5" y1="792.38" x2="1406.1" y2="792.38" stroke="#e7ecf0" stroke-width="1"/>
<line x1="1039.5" y1="760.25" x2="1406.1" y2="760.25" stroke="#e7ecf0" stroke-width="1"/>
<line x1="1039.5" y1="728.12" x2="1406.1" y2="728.12" stroke="#e7ecf0" stroke-width="1"/>
<line x1="1039.5" y1="695.99" x2="1406.1" y2="695.99" stroke="#e7ecf0" stroke-width="1"/>
<line x1="1100.6" y1="695.99" x2="1100.6" y2="920.9" stroke="#e7ecf0" stroke-width="1"/>
<line x1="1161.7" y1="695.99" x2="1161.7" y2="920.9" stroke="#e7ecf0" stroke-width="1"/>
<line x1="1222.8" y1="695.99" x2="1222.8" y2="920.9" stroke="#e7ecf0" stroke-width="1"/>
<line x1="1283.9" y1="695.99" x2="1283.9" y2="920.9" stroke="#e7ecf0" stroke-width="1"/>
<line x1="1345" y1="695.99" x2="1345" y2="920.9" stroke="#e7ecf0" stroke-width="1"/>
<line x1="1406.1" y1="695.99" x2="1406.1" y2="920.9" stroke="#e7ecf0" stroke-width="1"/>
<text transform="translate(1007.47 925.1) scale(1.0768 1)" font-size="14" fill="#3a3a3a">0.0</text>
<text transform="translate(1007.47 892.97) scale(1.0851 1)" font-size="14" fill="#3a3a3a">0.2</text>
<text transform="translate(1007.48 860.84) scale(1.0687 1)" font-size="14" fill="#3a3a3a">0.4</text>
<text transform="translate(1007.47 828.71) scale(1.0809 1)" font-size="14" fill="#3a3a3a">0.6</text>
<text transform="translate(1007.47 796.58) scale(1.0809 1)" font-size="14" fill="#3a3a3a">0.8</text>
<text transform="translate(1006.83 764.45) scale(1.1105 1)" font-size="14" fill="#3a3a3a">1.0</text>
<text transform="translate(1006.82 732.32) scale(1.1192 1)" font-size="14" fill="#3a3a3a">1.2</text>
<text transform="translate(1006.84 700.19) scale(1.1019 1)" font-size="14" fill="#3a3a3a">1.4</text>
<text x="1035.62" y="945.2" font-size="14" fill="#3a3a3a">0</text>
<text x="1096.5" y="945.2" font-size="14" fill="#3a3a3a">1</text>
<text x="1157.78" y="945.2" font-size="14" fill="#3a3a3a">2</text>
<text x="1218.95" y="945.2" font-size="14" fill="#3a3a3a">3</text>
<text x="1280.05" y="945.2" font-size="14" fill="#3a3a3a">4</text>
<text x="1341.12" y="945.2" font-size="14" fill="#3a3a3a">5</text>
<text x="1402.14" y="945.2" font-size="14" fill="#3a3a3a">6</text>
<line x1="1039.5" y1="695.99" x2="1039.5" y2="920.9" stroke="#a2a2a2" stroke-width="1.1"/>
<line x1="1039.5" y1="921.1" x2="1406.1" y2="921.1" stroke="#989898" stroke-width="1.5"/>
<circle cx="1284.5" cy="760.25" r="9.75" fill="#245d63" fill-opacity="0.48"/>
<circle cx="1284.5" cy="784.35" r="9.75" fill="#245d63" fill-opacity="0.48"/>
<circle cx="1284.5" cy="824.51" r="9.75" fill="#245d63" fill-opacity="0.48"/>
<circle cx="1345.6" cy="760.25" r="9.75" fill="#245d63" fill-opacity="0.48"/>
<circle cx="1345.6" cy="760.25" r="9.75" fill="#245d63" fill-opacity="0.48"/>
<circle cx="1345.6" cy="776.31" r="9.75" fill="#245d63" fill-opacity="0.48"/>
<circle cx="1345.6" cy="888.77" r="9.75" fill="#245d63" fill-opacity="0.48"/>
<circle cx="1101.2" cy="808.44" r="9.75" fill="#e0821a" fill-opacity="0.4"/>
<circle cx="1101.2" cy="824.51" r="9.75" fill="#e0821a" fill-opacity="0.4"/>
<circle cx="1101.2" cy="824.51" r="9.75" fill="#e0821a" fill-opacity="0.4"/>
<circle cx="1101.2" cy="824.51" r="9.75" fill="#e0821a" fill-opacity="0.4"/>
<circle cx="1101.2" cy="824.51" r="9.75" fill="#e0821a" fill-opacity="0.4"/>
<circle cx="1101.2" cy="824.51" r="9.75" fill="#e0821a" fill-opacity="0.4"/>
<circle cx="1101.2" cy="840.57" r="9.75" fill="#e0821a" fill-opacity="0.4"/>
<circle cx="1162.3" cy="728.12" r="9.75" fill="#e0821a" fill-opacity="0.4"/>
<circle cx="1162.3" cy="776.31" r="9.75" fill="#e0821a" fill-opacity="0.4"/>
<circle cx="1162.3" cy="792.38" r="9.75" fill="#e0821a" fill-opacity="0.4"/>
<circle cx="1162.3" cy="792.38" r="9.75" fill="#e0821a" fill-opacity="0.4"/>
<circle cx="1162.3" cy="792.38" r="9.75" fill="#e0821a" fill-opacity="0.4"/>
<circle cx="1162.3" cy="792.38" r="9.75" fill="#e0821a" fill-opacity="0.4"/>
<circle cx="1162.3" cy="792.38" r="9.75" fill="#e0821a" fill-opacity="0.4"/>
<circle cx="1162.3" cy="792.38" r="9.75" fill="#e0821a" fill-opacity="0.4"/>
<circle cx="1162.3" cy="800.41" r="9.75" fill="#e0821a" fill-opacity="0.4"/>
<circle cx="1162.3" cy="808.44" r="9.75" fill="#e0821a" fill-opacity="0.4"/>
<circle cx="1162.3" cy="808.44" r="9.75" fill="#e0821a" fill-opacity="0.4"/>
<circle cx="1162.3" cy="832.54" r="9.75" fill="#e0821a" fill-opacity="0.4"/>
<circle cx="1162.3" cy="840.57" r="9.75" fill="#e0821a" fill-opacity="0.4"/>
<circle cx="1162.3" cy="840.57" r="9.75" fill="#e0821a" fill-opacity="0.4"/>
<circle cx="1223.4" cy="792.38" r="9.75" fill="#e0821a" fill-opacity="0.4"/>
<circle cx="1223.4" cy="792.38" r="9.75" fill="#e0821a" fill-opacity="0.4"/>
<circle cx="1223.4" cy="824.51" r="9.75" fill="#e0821a" fill-opacity="0.4"/>
<circle cx="1284.5" cy="760.25" r="9.75" fill="#e0821a" fill-opacity="0.4"/>
<circle cx="1284.5" cy="792.38" r="9.75" fill="#e0821a" fill-opacity="0.4"/>
<circle cx="1284.5" cy="792.38" r="9.75" fill="#e0821a" fill-opacity="0.4"/>
<circle cx="1284.5" cy="832.54" r="9.75" fill="#e0821a" fill-opacity="0.4"/>
<circle cx="1345.6" cy="840.57" r="9.75" fill="#e0821a" fill-opacity="0.4"/>
<circle cx="1345.6" cy="872.7" r="9.75" fill="#e0821a" fill-opacity="0.4"/>
<text transform="translate(1157.73 969.9) scale(1.0433 1)" font-size="14" fill="#8a8a8a">Performance Rating</text>
<text transform="translate(995.6 808) rotate(-90) translate(-40.95 0)" font-size="14" fill="#8a8a8a">Compa Ratio</text>
<text transform="translate(1088.44 1009.9) scale(1.0474 1)" font-size="14" fill="#8a8a8a">Status</text>
<rect x="1151.1" y="997.8" width="12.9" height="12.9" fill="#245d63"/>
<text transform="translate(1173.1 1009.9) scale(0.984 1)" font-size="14" fill="#3a3a3a">At Risk</text>
<rect x="1230.1" y="997.8" width="12.9" height="12.9" fill="#e0821a"/>
<text transform="translate(1250.93 1009.9) scale(1.0436 1)" font-size="14" fill="#3a3a3a">Employed</text>
<text transform="translate(1461.01 612.3) scale(1.1212 1)" font-size="23.2" fill="#161513" font-weight="700">Hires</text>
<text transform="translate(1461.49 654.2) scale(1.0526 1)" font-size="26.2" fill="#161513" font-weight="700">487</text>
<text transform="translate(1522.84 654.4) scale(1.0717 1)" font-size="17" fill="#6e6e6e" font-weight="700">% of Target</text>
<text transform="translate(1629.06 654.4) scale(1.0768 1)" font-size="17" fill="#161513" font-weight="700">91.9%</text>
<line x1="1498.2" y1="896.95" x2="1900.2" y2="896.95" stroke="#e7ecf0" stroke-width="1"/>
<line x1="1498.2" y1="846.9" x2="1900.2" y2="846.9" stroke="#e7ecf0" stroke-width="1"/>
<line x1="1498.2" y1="796.85" x2="1900.2" y2="796.85" stroke="#e7ecf0" stroke-width="1"/>
<line x1="1498.2" y1="746.8" x2="1900.2" y2="746.8" stroke="#e7ecf0" stroke-width="1"/>
<line x1="1498.2" y1="696.75" x2="1900.2" y2="696.75" stroke="#e7ecf0" stroke-width="1"/>
<text transform="translate(1477.92 951) scale(1.1782 1)" font-size="14" fill="#3a3a3a">0</text>
<text transform="translate(1469.3 900.95) scale(1.1429 1)" font-size="14" fill="#3a3a3a">20</text>
<text transform="translate(1469.79 850.9) scale(1.1104 1)" font-size="14" fill="#3a3a3a">40</text>
<text transform="translate(1469.3 800.85) scale(1.1429 1)" font-size="14" fill="#3a3a3a">60</text>
<text transform="translate(1469.47 750.8) scale(1.1318 1)" font-size="14" fill="#3a3a3a">80</text>
<text transform="translate(1460.71 700.75) scale(1.13 1)" font-size="14" fill="#3a3a3a">100</text>
<line x1="1498.2" y1="947.5" x2="1900.2" y2="947.5" stroke="#8f8f8f" stroke-width="1.8"/>
<rect x="1510.2" y="796.85" width="32.6" height="150.25" fill="#572e6b"/>
<text transform="translate(1512 971.6) scale(1.0429 1)" font-size="14" fill="#3a3a3a">Amy</text>
<text transform="translate(1508.38 988.7) scale(1.0248 1)" font-size="14" fill="#3a3a3a">Wong</text>
<rect x="1567.6" y="771.83" width="32.6" height="175.28" fill="#572e6b"/>
<text transform="translate(1564.07 971.6) scale(1.0429 1)" font-size="14" fill="#3a3a3a">Carrie</text>
<text transform="translate(1569.16 988.7) scale(1.022 1)" font-size="14" fill="#3a3a3a">Ring</text>
<rect x="1625" y="809.36" width="32.6" height="137.74" fill="#572e6b"/>
<text transform="translate(1622.58 971.6) scale(1.0441 1)" font-size="14" fill="#3a3a3a">David</text>
<text transform="translate(1628.53 988.7) scale(1.0268 1)" font-size="14" fill="#3a3a3a">Jain</text>
<rect x="1682.4" y="746.8" width="32.6" height="200.3" fill="#572e6b"/>
<text transform="translate(1680.43 971.6) scale(1.0889 1)" font-size="14" fill="#3a3a3a">Doug</text>
<text transform="translate(1683.1 988.7) scale(1.0239 1)" font-size="14" fill="#3a3a3a">Lock</text>
<rect x="1739.8" y="759.31" width="32.6" height="187.79" fill="#572e6b"/>
<text transform="translate(1740.73 971.6) scale(1.0424 1)" font-size="14" fill="#3a3a3a">John</text>
<text transform="translate(1736.81 988.7) scale(1.0904 1)" font-size="14" fill="#3a3a3a">Smith</text>
<rect x="1797.2" y="809.36" width="32.6" height="137.74" fill="#572e6b"/>
<text transform="translate(1795.83 971.6) scale(0.9919 1)" font-size="14" fill="#3a3a3a">Steve</text>
<text transform="translate(1796.01 988.7) scale(1.0173 1)" font-size="14" fill="#3a3a3a">Mack</text>
<rect x="1854.6" y="716.77" width="32.6" height="230.33" fill="#572e6b"/>
<text transform="translate(1858.89 971.6) scale(1.0911 1)" font-size="14" fill="#3a3a3a">Tim</text>
<text transform="translate(1850.83 988.7) scale(1.048 1)" font-size="14" fill="#3a3a3a">Hardy</text>
<text transform="translate(1669.95 1012.9) scale(1.0302 1)" font-size="14" fill="#8a8a8a">Manager</text>
</svg>
</body></html>
